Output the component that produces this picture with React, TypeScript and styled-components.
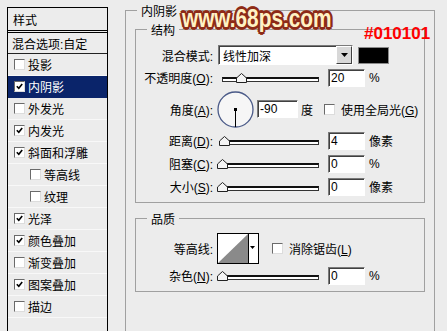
import React from "react";
import styled, { createGlobalStyle } from "styled-components";

const GlobalStyle = createGlobalStyle`
  html, body {
    margin: 0;
    padding: 0;
    background: #ececec;
    overflow: hidden;
  }
  body {
    font-family: "Liberation Sans", "Noto Sans CJK SC", sans-serif;
    font-size: 12px;
    color: #000;
  }
`;

const Page = styled.div`
  position: relative;
  display: flex;
  align-items: flex-start;
  width: 447px;
  height: 331px;
  padding: 1px 0 0 7px;
  box-sizing: border-box;
  overflow: hidden;
`;

/* ---------- left list of styles ---------- */

const StylePanel = styled.div`
  margin-top: 6px;
  width: 101px;
  height: 340px;
  flex-shrink: 0;
  box-sizing: border-box;
  border: 1px solid #000;
  display: flex;
  flex-direction: column;
`;

const PanelHeader = styled.div`
  height: 25px;
  box-sizing: border-box;
  padding-left: 5px;
  display: flex;
  align-items: center;
  border-bottom: 3px double #000;
`;

const BlendRow = styled.div`
  height: 21px;
  box-sizing: border-box;
  padding-left: 4px;
  display: flex;
  align-items: center;
  border-bottom: 1px solid #222;
`;

const StyleRow = styled.div<{ $selected?: boolean; $indent?: boolean }>`
  height: 22px;
  box-sizing: border-box;
  display: flex;
  align-items: center;
  gap: 3px;
  padding-left: ${(p) => (p.$indent ? 22 : 6)}px;
  border-bottom: 1px solid ${(p) => (p.$selected ? "#0a246a" : "#f8f8f8")};
  background: ${(p) => (p.$selected ? "#0a246a" : "transparent")};
  color: ${(p) => (p.$selected ? "#fff" : "#000")};
`;

const Box = styled.span<{ $gap?: number }>`
  width: 11px;
  height: 11px;
  flex-shrink: 0;
  box-sizing: border-box;
  margin-left: ${(p) => p.$gap ?? 0}px;
  background: #fff;
  border: 1px solid;
  border-color: #6a6a6a #dcdcdc #dcdcdc #6a6a6a;
  display: inline-flex;
  align-items: center;
  justify-content: center;
`;

const CheckBox = ({ checked, gap }: { checked?: boolean; gap?: number }) => (
  <Box $gap={gap}>
    {checked && (
      <svg width="7" height="7" viewBox="0 0 7 7">
        <path d="M0.8 3.2 L2.8 5.3 L6.2 1" fill="none" stroke="#000" strokeWidth="1.6" />
      </svg>
    )}
  </Box>
);

/* ---------- right option groups ---------- */

const EffectGroup = styled.fieldset`
  margin: 0 0 0 17px;
  padding: 0 9px;
  width: 310px;
  height: 360px;
  box-sizing: border-box;
  border: 1px solid #a0a0a0;
  min-width: 0;
`;

const SubGroup = styled.fieldset<{ $top: number; $pt: number; $pb: number }>`
  margin: ${(p) => p.$top}px 0 0 0;
  padding: ${(p) => p.$pt}px 0 ${(p) => p.$pb}px 0;
  width: 290px;
  box-sizing: border-box;
  border: 1px solid #a0a0a0;
  min-width: 0;
`;

const Legend = styled.legend<{ $offset: number }>`
  margin-left: ${(p) => p.$offset}px;
  padding: 4px 4px 0;
  line-height: 14px;
  font-size: 12px;
`;

const Row = styled.div<{ $h: number }>`
  display: flex;
  align-items: center;
  height: ${(p) => p.$h}px;
`;

const Label = styled.div`
  width: 77px;
  flex-shrink: 0;
  display: flex;
  justify-content: flex-end;
  white-space: nowrap;
`;

const Text = styled.span<{ $gap: number }>`
  margin-left: ${(p) => p.$gap}px;
  white-space: nowrap;
`;

const Select = styled.div`
  margin-left: 5px;
  width: 135px;
  height: 20px;
  box-sizing: border-box;
  display: flex;
  align-items: center;
  justify-content: space-between;
  background: #fff;
  border: 1px solid;
  border-color: #7a7a7a #fff #fff #7a7a7a;
  box-shadow: inset 1px 1px 0 #404040;
  padding-left: 4px;
`;

const DropButton = styled.span`
  width: 16px;
  height: 18px;
  box-sizing: border-box;
  display: flex;
  align-items: center;
  justify-content: center;
  background: #d8d8d8;
  border: 1px solid;
  border-color: #fff #404040 #404040 #fff;
`;

const Swatch = styled.div`
  margin-left: 5px;
  width: 31px;
  height: 17px;
  box-sizing: border-box;
  background: #000;
  border: 1px solid #8a8a8a;
`;

const Field = styled.div<{ $w: number; $gap: number }>`
  margin-left: ${(p) => p.$gap}px;
  width: ${(p) => p.$w}px;
  height: 18px;
  flex-shrink: 0;
  box-sizing: border-box;
  padding-left: 2px;
  display: flex;
  align-items: center;
  background: #fff;
  border: 1px solid;
  border-color: #7a7a7a #fff #fff #7a7a7a;
  box-shadow: inset 1px 1px 0 #404040;
`;

const SliderBox = styled.div`
  position: relative;
  margin-left: 5px;
  width: 100px;
  height: 10px;
  flex-shrink: 0;
`;

const Track = styled.div`
  margin: 4px 0 0 4px;
  width: 97px;
  height: 5px;
  box-sizing: border-box;
  background: #fff;
  border: 1px solid #333;
  border-top: 2px solid #111;
`;

const Thumb = styled.svg`
  position: absolute;
  top: 0;
`;

const Slider = ({ value }: { value: number }) => (
  <SliderBox>
    <Track />
    <Thumb width="11" height="10" viewBox="0 0 11 10" style={{ left: 4 + value * 97 - 5.5 }}>
      <path d="M0.5 9.5 V5 L5.5 0.5 L10.5 5 V9.5 Z" fill="#f4f4f4" stroke="#222" />
    </Thumb>
  </SliderBox>
);

const Dial = styled.svg`
  margin-left: 4px;
  flex-shrink: 0;
`;

const Contour = styled.svg`
  margin-left: 4px;
  flex-shrink: 0;
`;

const Watermark = styled.div`
  position: absolute;
  left: 182px;
  top: 5px;
  font-family: "Liberation Sans", sans-serif;
  font-weight: bold;
  font-size: 26px;
  line-height: 26px;
  color: #fff2c4;
  transform: scaleX(0.8);
  transform-origin: left top;
  text-shadow:
    2px 0 0 #8c2a18, -2px 0 0 #8c2a18, 0 2px 0 #8c2a18, 0 -2px 0 #8c2a18,
    2px 2px 0 #8c2a18, -2px -2px 0 #8c2a18, 2px -2px 0 #8c2a18, -2px 2px 0 #8c2a18,
    3px 0 0 #9a3a22, -3px 0 0 #9a3a22, 0 3px 0 #9a3a22, 0 -3px 0 #9a3a22;
  white-space: nowrap;
`;

const ColorNote = styled.div`
  position: absolute;
  left: 364px;
  top: 25px;
  font-family: "Liberation Sans", sans-serif;
  font-weight: bold;
  font-size: 17px;
  line-height: 17px;
  color: #ff0000;
`;

const styleList = [
  { name: "投影", checked: false },
  { name: "内阴影", checked: true, selected: true },
  { name: "外发光", checked: false },
  { name: "内发光", checked: true },
  { name: "斜面和浮雕", checked: true },
  { name: "等高线", checked: false, indent: true },
  { name: "纹理", checked: false, indent: true },
  { name: "光泽", checked: true },
  { name: "颜色叠加", checked: true },
  { name: "渐变叠加", checked: false },
  { name: "图案叠加", checked: true },
  { name: "描边", checked: false },
];

const App = () => {
  return (
    <Page>
      <GlobalStyle />
      <StylePanel>
        <PanelHeader>样式</PanelHeader>
        <BlendRow>混合选项:自定</BlendRow>
        {styleList.map((s) => (
          <StyleRow key={s.name} $selected={s.selected} $indent={s.indent}>
            <CheckBox checked={s.checked} />
            {s.name}
          </StyleRow>
        ))}
      </StylePanel>

      <EffectGroup>
        <Legend $offset={2}>内阴影</Legend>
        <SubGroup $top={1} $pt={6} $pb={4}>
          <Legend $offset={11}>结构</Legend>
          <Row $h={22}>
            <Label>混合模式:</Label>
            <Select>
              线性加深
              <DropButton>
                <svg width="7" height="4" viewBox="0 0 7 4">
                  <path d="M0 0 H7 L3.5 4 Z" fill="#000" />
                </svg>
              </DropButton>
            </Select>
            <Swatch />
          </Row>
          <Row $h={23}>
            <Label>
              <span>
                不透明度(<u>O</u>):
              </span>
            </Label>
            <Slider value={0.2} />
            <Field $w={37} $gap={10}>20</Field>
            <Text $gap={4}>%</Text>
          </Row>
          <Row $h={40}>
            <Label>
              <span>
                角度(<u>A</u>):
              </span>
            </Label>
            <Dial width="37" height="37" viewBox="0 0 37 37">
              <circle cx="18.5" cy="18.5" r="17.5" fill="#f6f6f6" stroke="#4a5a88" strokeWidth="1.3" />
              <line x1="18.5" y1="18.5" x2="18.5" y2="36" stroke="#000" strokeWidth="1" />
              <rect x="17" y="17" width="3" height="3" fill="#000" />
            </Dial>
            <Field $w={41} $gap={3}>-90</Field>
            <Text $gap={3}>度</Text>
            <CheckBox gap={11} />
            <Text $gap={6}>
              使用全局光(<u>G</u>)
            </Text>
          </Row>
          <Row $h={23}>
            <Label>
              <span>
                距离(<u>D</u>):
              </span>
            </Label>
            <Slider value={0.03} />
            <Field $w={37} $gap={10}>4</Field>
            <Text $gap={4}>像素</Text>
          </Row>
          <Row $h={23}>
            <Label>
              <span>
                阻塞(<u>C</u>):
              </span>
            </Label>
            <Slider value={0} />
            <Field $w={37} $gap={10}>0</Field>
            <Text $gap={4}>%</Text>
          </Row>
          <Row $h={23}>
            <Label>
              <span>
                大小(<u>S</u>):
              </span>
            </Label>
            <Slider value={0} />
            <Field $w={37} $gap={10}>0</Field>
            <Text $gap={4}>像素</Text>
          </Row>
        </SubGroup>

        <SubGroup $top={6} $pt={5} $pb={4}>
          <Legend $offset={11}>品质</Legend>
          <Row $h={32}>
            <Label>等高线:</Label>
            <Contour width="42" height="31" viewBox="0 0 42 31">
              <rect x="0.5" y="0.5" width="41" height="30" fill="#fff" stroke="#000" />
              <polygon points="1,30 31,1 31,30" fill="#8a8a8a" />
              <line x1="31.5" y1="1" x2="31.5" y2="30" stroke="#000" />
              <polygon points="33,13 38,13 35.5,16" fill="#000" />
            </Contour>
            <CheckBox gap={13} />
            <Text $gap={6}>
              消除锯齿(<u>L</u>)
            </Text>
          </Row>
          <Row $h={23}>
            <Label>
              <span>
                杂色(<u>N</u>):
              </span>
            </Label>
            <Slider value={0} />
            <Field $w={37} $gap={10}>0</Field>
            <Text $gap={4}>%</Text>
          </Row>
        </SubGroup>
      </EffectGroup>

      <Watermark>www.68ps.com</Watermark>
      <ColorNote>#010101</ColorNote>
    </Page>
  );
};

export default App;
